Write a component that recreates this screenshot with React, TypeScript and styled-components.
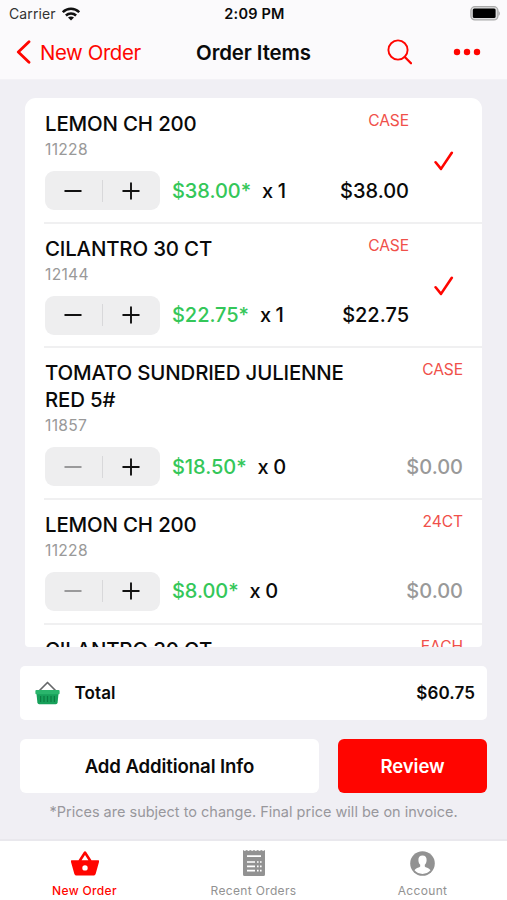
import React from "react";
import styled, { createGlobalStyle } from "styled-components";

const RED = "#ff0500";

const GlobalStyle = createGlobalStyle`
  * { box-sizing: border-box; }
  body { margin: 0; background: #f0eff4; }
  button { border: 0; background: none; padding: 0; margin: 0; font: inherit; color: inherit; letter-spacing: inherit; }
`;

const Screen = styled.div`
  width: 507px;
  height: 900px;
  display: flex;
  flex-direction: column;
  overflow: hidden;
  background: #f0eff4;
  color: #0a0a0a;
  font-family: Inter, "Liberation Sans", sans-serif;
  white-space: nowrap;
`;

const Header = styled.header`
  height: 80px;
  flex: none;
  background: #fbfafc;
  border-bottom: 1px solid #f3f2f6;
`;

const StatusBar = styled.div`
  height: 27px;
  display: grid;
  grid-template-columns: 1fr auto 1fr;
  align-items: center;
  padding: 0 7px 0 9px;
`;

const Carrier = styled.div`
  display: flex;
  align-items: center;
  gap: 6px;
  font-size: 14px;
  color: #333;
  letter-spacing: 0.1px;
`;

const Clock = styled.div`
  font-size: 14.5px;
  font-weight: 600;
  letter-spacing: 0.2px;
`;

const Battery = styled.svg`
  justify-self: end;
`;

const NavBar = styled.nav`
  height: 50px;
  display: grid;
  grid-template-columns: 1fr auto 1fr;
  align-items: center;
  padding: 0 26px 0 16px;
`;

const BackButton = styled.button`
  display: flex;
  align-items: center;
  gap: 9px;
  color: ${RED};
  font-size: 20.4px;
  letter-spacing: -0.4px;
`;

const Title = styled.h1`
  margin: 0 -5px 0 5px;
  font-size: 20.4px;
  font-weight: 600;
  letter-spacing: -0.1px;
`;

const NavActions = styled.div`
  display: flex;
  justify-content: flex-end;
  align-items: center;
  gap: 41px;
  color: ${RED};
`;

const Main = styled.main`
  flex: 1;
  min-height: 0;
  padding: 18px 20px 0;
  display: flex;
  flex-direction: column;
`;

const ItemList = styled.ul`
  list-style: none;
  margin: 0 5px;
  padding: 1px 0 0;
  height: 549px;
  flex: none;
  overflow: hidden;
  background: #fff;
  border-radius: 11px 11px 4px 4px;
`;

const Item = styled.li<{ $tall?: boolean; $checked?: boolean }>`
  margin-left: 19px;
  padding: 11px ${(p) => (p.$checked ? 28 : 19)}px 10px 1px;
  border-bottom: 2px solid #f0f0f1;
  display: flex;
  height: ${(p) => (p.$tall ? 151.5 : 124.7)}px;
`;

const ItemBody = styled.div`
  flex: 1;
  min-width: 0;
  display: flex;
  flex-direction: column;
`;

const ItemHead = styled.div`
  display: flex;
  justify-content: space-between;
`;

const ItemName = styled.h2`
  margin: 0;
  font-size: 20.4px;
  line-height: 27px;
  font-weight: 550;
  letter-spacing: -0.15px;
  max-width: 310px;
  white-space: normal;
`;

const Unit = styled.span`
  margin-top: 1px;
  font-size: 15.6px;
  line-height: 19px;
  color: #f0504a;
  letter-spacing: -0.1px;
`;

const Sku = styled.div`
  font-size: 15.6px;
  line-height: 26px;
  color: #999;
  letter-spacing: 0.3px;
`;

const ItemFoot = styled.div`
  margin-top: 8px;
  display: flex;
  align-items: center;
`;

const Stepper = styled.div`
  width: 115px;
  height: 39px;
  flex: none;
  padding-right: 1px;
  border-radius: 9px;
  background: #eeeeef;
  display: grid;
  grid-template-columns: 1fr 1px 1fr;
  align-items: center;
  justify-items: center;
`;

const StepperRule = styled.span`
  width: 1px;
  height: 22px;
  background: #d8d8da;
`;

const StepButton = styled.button<{ $off?: boolean }>`
  display: flex;
  color: ${(p) => (p.$off ? "#9a9a9b" : "#111")};
`;

const Price = styled.span`
  margin-left: 12px;
  font-size: 20px;
  font-weight: 550;
  letter-spacing: -0.05px;
  color: #34c759;
`;

const Quantity = styled.span`
  margin-left: 11px;
  font-size: 20px;
  font-weight: 550;
  letter-spacing: -0.4px;
`;

const LineTotal = styled.span<{ $empty?: boolean }>`
  margin-left: auto;
  font-size: 20px;
  font-weight: 550;
  color: ${(p) => (p.$empty ? "#999" : "#0a0a0a")};
`;

const CheckSlot = styled.div`
  width: 45px;
  flex: none;
  display: flex;
  justify-content: flex-end;
  align-items: center;
`;

const TotalBar = styled.section`
  margin-top: 19px;
  height: 54px;
  flex: none;
  display: flex;
  align-items: center;
  padding: 0 12px 0 15px;
  border-radius: 5px;
  background: #fff;
  font-size: 17px;
  font-weight: 600;
  letter-spacing: 0.1px;
`;

const TotalLabel = styled.span`
  margin-left: 14.5px;
`;

const TotalValue = styled.span`
  margin-left: auto;
`;

const Actions = styled.div`
  margin-top: 19px;
  display: grid;
  grid-template-columns: 299px 149px;
  gap: 19px;
`;

const ActionButton = styled.button<{ $primary?: boolean }>`
  height: 54px;
  border-radius: 6px;
  font-size: 18.6px;
  font-weight: 600;
  letter-spacing: -0.1px;
  background: ${(p) => (p.$primary ? RED : "#fff")};
  color: ${(p) => (p.$primary ? "#fff" : "#0a0a0a")};
`;

const Disclaimer = styled.p`
  margin: 9px 0 0;
  text-align: center;
  font-size: 14.5px;
  line-height: 20px;
  color: #98979c;
`;

const TabBar = styled.footer`
  height: 61px;
  flex: none;
  display: grid;
  grid-template-columns: repeat(3, 1fr);
  background: #fff;
  border-top: 2px solid #e9e8ed;
`;

const Tab = styled.button<{ $active?: boolean }>`
  display: flex;
  flex-direction: column;
  align-items: center;
  padding-top: 9px;
  gap: 7px;
  font-size: 12px;
  line-height: 15px;
  letter-spacing: 0.35px;
  font-weight: ${(p) => (p.$active ? 500 : 400)};
  color: ${(p) => (p.$active ? RED : "#929292")};
`;

const TabIcon = styled.span`
  height: 26px;
  display: flex;
  align-items: center;
`;

interface OrderItem {
  name: string;
  unit: string;
  tall?: boolean;
  line?: { sku: string; price: string; qty: number; total: string };
}

const items: OrderItem[] = [
  { name: "LEMON CH 200", unit: "CASE", line: { sku: "11228", price: "$38.00*", qty: 1, total: "$38.00" } },
  { name: "CILANTRO 30 CT", unit: "CASE", line: { sku: "12144", price: "$22.75*", qty: 1, total: "$22.75" } },
  { name: "TOMATO SUNDRIED JULIENNE RED 5#", unit: "CASE", tall: true, line: { sku: "11857", price: "$18.50*", qty: 0, total: "$0.00" } },
  { name: "LEMON CH 200", unit: "24CT", line: { sku: "11228", price: "$8.00*", qty: 0, total: "$0.00" } },
  { name: "CILANTRO 30 CT", unit: "EACH" },
];

const WifiIcon = () => (
  <svg width="18" height="14" viewBox="0 0 18 14" fill="none" stroke="#111" strokeWidth="2.5">
    <path d="M.8 5.2C5.4.7 12.6.7 17.200 5.2" />
    <path d="M3.900 8.500C6.800 5.700 11.200 5.700 14.100 8.500" />
    <path d="M9 13.600 6 10.600C7.700 9.100 10.300 9.100 12 10.600Z" fill="#111" stroke="none" />
  </svg>
);

const BatteryIcon = () => (
  <Battery width="30" height="15" viewBox="0 0 30 15">
    <rect x=".9" y=".7" width="27" height="13.2" rx="4" fill="#dededf" stroke="#aaa" strokeWidth="1.3" />
    <rect x="2.800" y="2.6" width="22.8" height="9.4" rx="1.500" fill="#000" />
    <path d="M28.500 5v4.8c1.800-.7 1.800-4.100 0-4.800Z" fill="#aaa" />
  </Battery>
);

const StepIcon = ({ plus }: { plus?: boolean }) => (
  <svg width="18" height="18" viewBox="0 0 18 18" stroke="currentColor" strokeWidth="1.9" strokeLinecap="round">
    <path d={plus ? "M1.2 9h15.6M9 1.2v15.6" : "M1.2 9h15.6"} />
  </svg>
);

const CheckIcon = () => (
  <svg width="20" height="20" viewBox="0 0 20 20" fill="none" stroke={RED} strokeWidth="2.6" strokeLinecap="round" strokeLinejoin="round">
    <path d="M1.600 11.3 7 17.900 17.800 1.8" />
  </svg>
);

const GreenBasket = () => (
  <svg width="25" height="24" viewBox="0 0 25 24">
    <path d="M4.500 9.500 12.500 1.500 20.500 9.500" fill="none" stroke="#66686a" strokeWidth="1.7" strokeLinejoin="round" />
    <path d="M1.200 10h22.600l-1.200 11.600q-.2 1.600-1.800 1.600H4.200q-1.600 0-1.800-1.600Z" fill="#17a05a" />
    <path d="M5.600 15v6M9 15v6M12.500 15v6M16 15v6M19.400 15v6" stroke="#0b7c42" strokeWidth="1.200" />
    <rect x=".4" y="9" width="24.2" height="4.200" rx=".9" fill="#2ab56c" />
  </svg>
);

const BasketTab = () => (
  <svg width="28" height="25" viewBox="0 0 28 25" fill="currentColor">
    <path fillRule="evenodd" d="M14 .3c.5 0 .9.2 1.2.6L20.500 9.300H27c1 0 1.300.6 1.100 1.400l-3.400 12.100C24.300 24 23.600 24.600 22.400 24.600H5.600C4.400 24.600 3.700 24 3.300 22.800L-.1 10.700C-.3 9.900 0 9.300 1 9.300H7.500L12.800.9c.3-.4.700-.6 1.200-.6ZM14 3.900 10.600 9.300h6.800ZM14 14.200a2.700 2.700 0 1 0 0 5.400 2.700 2.700 0 0 0 0-5.400Z" />
  </svg>
);

const ReceiptTab = () => (
  <svg width="22" height="26" viewBox="0 0 22 26">
    <path d="M0 0 1.800 1 3.700 0 5.500 1 7.300 0 9.200 1 11 0 12.800 1 14.700 0 16.500 1 18.300 0 20.200 1 22 0V24.500Q22 26 20.500 26H1.500Q0 26 0 24.500Z" fill="currentColor" />
    <path d="M4 6.200h14M4 12h8M4 16.300h8M4 20.600h8M14 12h1.600M17 12h1.600M14 16.300h1.600M17 16.300h1.600M14 20.600h1.600M17 20.600h1.600" stroke="#fff" strokeWidth="1.700" />
  </svg>
);

const AccountTab = () => (
  <svg width="25" height="25" viewBox="0 0 25 25">
    <circle cx="12.500" cy="12.500" r="12.300" fill="currentColor" />
    <path d="M12.500 4.600c2.800 0 4.300 1.900 4.100 4.700-.1 2-.8 3.500-1.800 4.500v1.700c.5 1 4.200 1.400 5.700 3.800-2 2.300-4.800 3.600-8 3.600s-6-1.300-8-3.600c1.500-2.400 5.200-2.800 5.700-3.800v-1.700c-1-1-1.700-2.500-1.800-4.500-.2-2.800 1.300-4.700 4.100-4.700Z" fill="#fff" />
  </svg>
);

export default function App() {
  return (
    <Screen>
      <GlobalStyle />
      <Header>
        <StatusBar>
          <Carrier>Carrier <WifiIcon /></Carrier>
          <Clock>2:09 PM</Clock>
          <BatteryIcon />
        </StatusBar>
        <NavBar>
          <BackButton>
            <svg width="15" height="24" viewBox="0 0 15 24" fill="none" stroke="currentColor" strokeWidth="2.800" strokeLinecap="round" strokeLinejoin="round">
              <path d="M13 1.800 2.300 12 13 22.200" />
            </svg>
            New Order
          </BackButton>
          <Title>Order Items</Title>
          <NavActions>
            <svg width="26" height="26" viewBox="0 0 26 26" fill="none" stroke="currentColor" strokeWidth="1.900" strokeLinecap="round">
              <circle cx="12" cy="11" r="9.600" />
              <path d="m18.800 18 6.200 6.200" strokeWidth="2.300" />
            </svg>
            <svg width="28" height="8" viewBox="0 0 28 8" fill="currentColor">
              <circle cx="4" cy="4" r="3.200" /><circle cx="14" cy="4" r="3.200" /><circle cx="24" cy="4" r="3.200" />
            </svg>
          </NavActions>
        </NavBar>
      </Header>
      <Main>
        <ItemList>
          {items.map(({ name, unit, tall, line }, i) => {
            const checked = !!line && line.qty > 0;
            return (
              <Item key={i} $tall={tall} $checked={checked}>
                <ItemBody>
                  <ItemHead>
                    <ItemName>{name}</ItemName>
                    <Unit>{unit}</Unit>
                  </ItemHead>
                  {line && (
                    <>
                      <Sku>{line.sku}</Sku>
                      <ItemFoot>
                        <Stepper>
                          <StepButton $off={!checked}><StepIcon /></StepButton>
                          <StepperRule />
                          <StepButton><StepIcon plus /></StepButton>
                        </Stepper>
                        <Price>{line.price}</Price>
                        <Quantity>x {line.qty}</Quantity>
                        <LineTotal $empty={!checked}>{line.total}</LineTotal>
                      </ItemFoot>
                    </>
                  )}
                </ItemBody>
                {checked && <CheckSlot><CheckIcon /></CheckSlot>}
              </Item>
            );
          })}
        </ItemList>
        <TotalBar>
          <GreenBasket />
          <TotalLabel>Total</TotalLabel>
          <TotalValue>$60.75</TotalValue>
        </TotalBar>
        <Actions>
          <ActionButton>Add Additional Info</ActionButton>
          <ActionButton $primary>Review</ActionButton>
        </Actions>
        <Disclaimer>*Prices are subject to change. Final price will be on invoice.</Disclaimer>
      </Main>
      <TabBar>
        <Tab $active><TabIcon><BasketTab /></TabIcon>New Order</Tab>
        <Tab><TabIcon><ReceiptTab /></TabIcon>Recent Orders</Tab>
        <Tab><TabIcon><AccountTab /></TabIcon>Account</Tab>
      </TabBar>
    </Screen>
  );
}
